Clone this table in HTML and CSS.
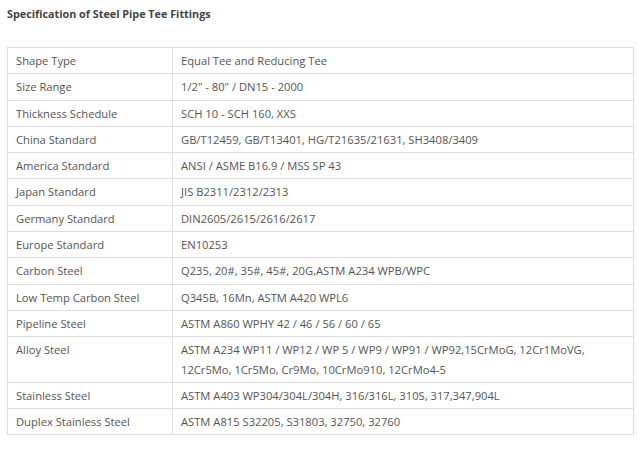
FILE: index.html
```html
<!DOCTYPE html>
<html>
<head>
<meta charset="utf-8">
<link rel="stylesheet" href="styles.css">
</head>
<body>
<h3 class="title">Specification of Steel Pipe Tee Fittings</h3>
<table class="spec">
<tbody>
<tr><td class="k">Shape Type</td><td>Equal Tee and Reducing Tee</td></tr>
<tr><td class="k">Size Range</td><td>1/2" - 80" / DN15 - 2000</td></tr>
<tr><td class="k">Thickness Schedule</td><td>SCH 10 - SCH 160, XXS</td></tr>
<tr><td class="k">China Standard</td><td>GB/T12459, GB/T13401, HG/T21635/21631, SH3408/3409</td></tr>
<tr><td class="k">America Standard</td><td>ANSI / ASME B16.9 / MSS SP 43</td></tr>
<tr><td class="k">Japan Standard</td><td>JIS B2311/2312/2313</td></tr>
<tr><td class="k">Germany Standard</td><td>DIN2605/2615/2616/2617</td></tr>
<tr><td class="k">Europe Standard</td><td>EN10253</td></tr>
<tr><td class="k">Carbon Steel</td><td>Q235, 20#, 35#, 45#, 20G,ASTM A234 WPB/WPC</td></tr>
<tr><td class="k">Low Temp Carbon Steel</td><td>Q345B, 16Mn, ASTM A420 WPL6</td></tr>
<tr><td class="k">Pipeline Steel</td><td>ASTM A860 WPHY 42 / 46 / 56 / 60 / 65</td></tr>
<tr><td class="k">Alloy Steel</td><td>ASTM A234 WP11 / WP12 / WP 5 / WP9 / WP91 / WP92,15CrMoG, 12Cr1MoVG,<br>12Cr5Mo, 1Cr5Mo, Cr9Mo, 10CrMo910, 12CrMo4-5</td></tr>
<tr><td class="k">Stainless Steel</td><td>ASTM A403 WP304/304L/304H, 316/316L, 310S, 317,347,904L</td></tr>
<tr><td class="k">Duplex Stainless Steel</td><td>ASTM A815 S32205, S31803, 32750, 32760</td></tr>
</tbody>
</table>
</body>
</html>
```
FILE: styles.css
```css
html, body {
  background: #fff;
}
body {
  margin: 0;
  padding: 0 4px 0 7px;
  font-family: "Open Sans", "Noto Sans", sans-serif;
  font-size: 11.2px;
  color: #555;
}
.title {
  margin: 0;
  padding-top: 5px;
  height: 42px;
  font-size: 10.8px;
  line-height: 17px;
  font-weight: 700;
  color: #444;
}
.spec {
  width: 627px;
  border-collapse: collapse;
  border: 1px solid #ddd;
}
.spec td {
  border: 1px solid #ddd;
  padding: 3px 8px;
  line-height: 19.3px;
  vertical-align: top;
}
.spec td.k {
  width: 148px;
}
```
